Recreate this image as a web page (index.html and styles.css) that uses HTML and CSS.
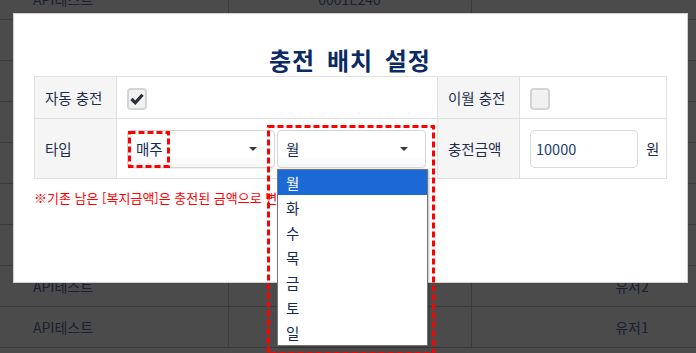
FILE: index.html
```html
<!DOCTYPE html>
<html lang="ko">
<head>
    <meta charset="UTF-8">
    <meta name="viewport" content="width=device-width, initial-scale=1.0">
    <title>충전 배치 설정</title>
    <link rel="stylesheet" href="styles.css">
</head>
<body>
    <table class="list-table">
        <colgroup>
            <col style="width: 228px">
            <col style="width: 243px">
            <col style="width: 322px">
        </colgroup>
        <tr><td class="name">API테스트</td><td>0001E240</td><td>-</td></tr>
        <tr><td class="name">API테스트</td><td>0001E241</td><td>유저6</td></tr>
        <tr><td class="name">API테스트</td><td>0001E242</td><td>유저5</td></tr>
        <tr><td class="name">API테스트</td><td>0001E243</td><td>유저4</td></tr>
        <tr><td class="name">API테스트</td><td>0001E244</td><td>유저3</td></tr>
        <tr><td class="name">API테스트</td><td>0001E245</td><td>-</td></tr>
        <tr><td class="name">API테스트</td><td>0001E246</td><td>-</td></tr>
        <tr><td class="name">API테스트</td><td></td><td>유저2</td></tr>
        <tr><td class="name">API테스트</td><td></td><td>유저1</td></tr>
    </table>

    <div class="modal">
        <h2 class="modal-title">충전 배치 설정</h2>
        <table class="form-table">
            <colgroup>
                <col style="width: 82px">
                <col style="width: 321px">
                <col style="width: 82px">
                <col style="width: 147px">
            </colgroup>
            <tr class="row-check">
                <th>자동 충전</th>
                <td>
                    <span class="checkbox checked">
                        <svg width="16" height="16" viewBox="0 0 16 16"><path d="M2.5 8 L6.3 11.8 L13.5 3.8" fill="none" stroke="#2b2f36" stroke-width="3.2"/></svg>
                    </span>
                </td>
                <th>이월 충전</th>
                <td><span class="checkbox"></span></td>
            </tr>
            <tr class="row-type">
                <th>타입</th>
                <td>
                    <div class="select-group">
                        <div class="select">
                            <span>매주</span>
                            <i class="caret"></i>
                            <div class="mark mark-small">
                                <svg width="42" height="37" viewBox="0 0 42 37"><rect x="1.5" y="1.5" width="39" height="34" fill="none" stroke="#ff0000" stroke-width="3" stroke-dasharray="6 3"/></svg>
                            </div>
                        </div>
                        <div class="select open">
                            <span>월</span>
                            <i class="caret"></i>
                            <ul class="dropdown">
                                <li class="active">월</li>
                                <li>화</li>
                                <li>수</li>
                                <li>목</li>
                                <li>금</li>
                                <li>토</li>
                                <li>일</li>
                            </ul>
                            <div class="mark mark-large">
                                <svg width="168" height="230" viewBox="0 0 168 230"><rect x="1.5" y="1.5" width="165" height="227" fill="none" stroke="#ff0000" stroke-width="3" stroke-dasharray="6 3"/></svg>
                            </div>
                        </div>
                    </div>
                </td>
                <th>충전금액</th>
                <td>
                    <div class="amount">
                        <input type="text" value="10000">
                        <span>원</span>
                    </div>
                </td>
            </tr>
        </table>
        <p class="note">※기존 남은 [복지금액]은 충전된 금액으로 변경됩니다.</p>
    </div>
</body>
</html>
```

FILE: styles.css
```css
body {
    margin: 0;
    background: #4b4b4b;
    font-family: "Noto Sans CJK KR", "Noto Sans", sans-serif;
    overflow: hidden;
    height: 353px;
}

.list-table {
    border-collapse: collapse;
    table-layout: fixed;
    width: 793px;
    margin-top: -21px;
}

.list-table td {
    height: 40px;
    padding: 0;
    border-bottom: 1px solid #3b3b3b;
    border-right: 1px solid #3b3b3b;
    text-align: center;
    font-size: 14px;
    color: #1b2130;
}

.list-table td.name {
    text-align: left;
    padding-left: 33px;
}

.modal {
    position: absolute;
    left: 13px;
    top: 13px;
    width: 675px;
    height: 270px;
    box-sizing: border-box;
    background: #fff;
    border: 1px solid #cfcfcf;
    padding: 0 21px 0 20px;
}

.modal-title {
    margin: 32px 0 2px;
    text-align: center;
    font-size: 24px;
    line-height: 28px;
    font-weight: bold;
    letter-spacing: 1px;
    word-spacing: 4px;
    color: #0b2b63;
}

.form-table {
    border-collapse: collapse;
    table-layout: fixed;
    width: 632px;
}

.form-table th,
.form-table td {
    border: 1px solid #e1e1e1;
    padding: 0 10px;
    font-size: 14.5px;
    font-weight: normal;
    color: #1f2d49;
    text-align: left;
}

.form-table th {
    background: #f5f5f5;
    padding-left: 10px;
}

.row-check th,
.row-check td {
    height: 41px;
}

.row-type th,
.row-type td {
    height: 59px;
}

.checkbox {
    display: flex;
    align-items: center;
    justify-content: center;
    width: 20px;
    height: 22px;
    box-sizing: border-box;
    border: 2px solid #d4d4d4;
    border-radius: 4px;
    background: #f1f1f1;
    margin-top: 2px;
}

.select-group {
    display: flex;
    gap: 2px;
}

.select {
    position: relative;
    display: flex;
    align-items: center;
    justify-content: space-between;
    width: 148px;
    height: 38px;
    box-sizing: border-box;
    padding: 0 17px 0 8px;
    border: 1px solid #d6d6d6;
    border-radius: 4px;
    background: linear-gradient(#fff 70%, #f6f6f6);
    box-shadow: 0 1px 1px rgba(0, 0, 0, 0.06);
    font-size: 14.5px;
    color: #152a55;
}

.select.open {
    width: 149px;
}

.caret {
    width: 0;
    height: 0;
    border-left: 4px solid transparent;
    border-right: 4px solid transparent;
    border-top: 4px solid #3a3a3a;
}

.dropdown {
    position: absolute;
    left: -1px;
    top: 38px;
    width: 151px;
    box-sizing: border-box;
    margin: 0;
    padding: 0;
    list-style: none;
    background: #fff;
    border: 1px solid #767676;
    box-shadow: 1px 1px 2px rgba(0, 0, 0, 0.25);
    z-index: 5;
}

.dropdown li {
    height: 25px;
    line-height: 25px;
    padding-left: 8px;
    font-size: 14.5px;
    color: #152a55;
}

.dropdown li.active {
    background: #1a69d4;
    color: #fff;
}

.mark {
    position: absolute;
    z-index: 6;
    line-height: 0;
}

.mark-small {
    left: 0;
    top: 0;
}

.mark-large {
    left: -11px;
    top: -6px;
}

.amount {
    display: flex;
    align-items: center;
    gap: 8px;
}

.amount input {
    width: 108px;
    height: 38px;
    box-sizing: border-box;
    border: 1px solid #d9d9d9;
    border-radius: 5px;
    padding: 0 5px;
    font-family: inherit;
    font-size: 14.5px;
    color: #1b3b70;
}

.note {
    margin: 10px 0 0;
    font-size: 13px;
    line-height: 18px;
    color: #ff0000;
    white-space: nowrap;
}
```
